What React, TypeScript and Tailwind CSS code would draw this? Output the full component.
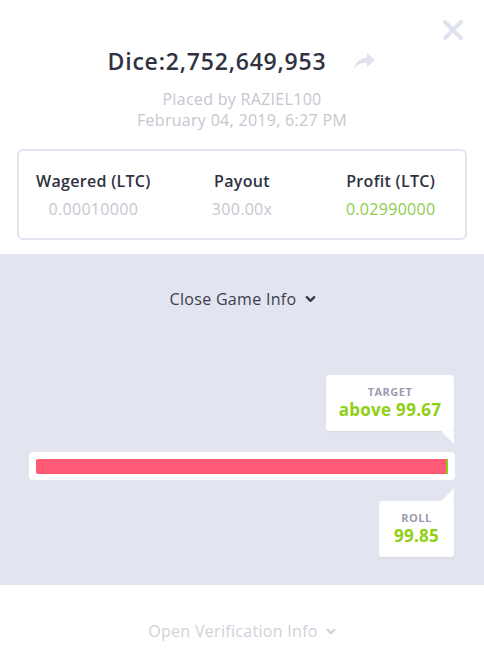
import React from 'react';

const font = { fontFamily: '"Open Sans", Lato, sans-serif' };

const Chevron = ({ className = '' }: { className?: string }) => (
  <svg viewBox="0 0 12 8" className={className} fill="none" stroke="currentColor" strokeWidth="2.6" strokeLinecap="round" strokeLinejoin="round">
    <path d="M2 2l4 4 4-4" />
  </svg>
);

export default function App() {
  return (
    <div className="w-[484px] h-[650px] bg-white flex flex-col text-[#2f3241] tracking-[0.3px]" style={font}>
      {/* header */}
      <div className="relative flex flex-col items-center pt-[46px]">
        <button className="absolute right-[19px] top-[18px] text-[#dfe1ee]">
          <svg viewBox="0 0 24 24" className="w-[24px] h-[24px]" stroke="currentColor" strokeWidth="4" strokeLinecap="round">
            <path d="M4 4l16 16M20 4L4 20" />
          </svg>
        </button>
        <div className="flex items-center">
          <h1 className="text-[23px] font-semibold leading-[30px] tracking-[0.8px]">Dice:2,752,649,953</h1>
          <svg viewBox="0 0 24 20" className="w-[22px] h-[18px] ml-[28px] text-[#dfe1ee]" fill="currentColor">
            <path d="M14 1l9 8-9 8v-5C7 12 3 14 0 19c1-7 5-12 14-13V1z" />
          </svg>
        </div>
        <div className="mt-[13px] text-[16px] leading-[21px] text-[#c6c7d0] text-center">
          <div>Placed by RAZIEL100</div>
          <div>February 04, 2019, 6:27 PM</div>
        </div>
      </div>

      {/* stats card */}
      <div className="mx-[17px] mt-[18px] mb-[14px] h-[91px] border-2 border-[#e3e4ef] rounded-[6px] grid grid-cols-3 items-center py-[18px]">
        {[
          ['Wagered (LTC)', '0.00010000', 'text-[#c6c7d0]'],
          ['Payout', '300.00x', 'text-[#c6c7d0]'],
          ['Profit (LTC)', '0.02990000', 'text-[#8dcb4e]'],
        ].map(([label, value, color]) => (
          <div key={label} className="flex flex-col items-center">
            <div className="text-[16px] font-semibold leading-[20px]">{label}</div>
            <div className={`text-[16px] leading-[20px] mt-[8px] ${color}`}>{value}</div>
          </div>
        ))}
      </div>

      {/* game info */}
      <div className="bg-[#e2e4f0] h-[331px] flex flex-col px-[29px] pt-[35px]">
        <div className="flex items-center justify-center text-[16px] text-[#3b3d4c] leading-[20px] pl-[2px]">
          Close Game Info
          <Chevron className="w-[11px] h-[8px] ml-[9px]" />
        </div>

        <div className="flex flex-col items-end mt-[66px]">
          <div className="relative w-[128px] h-[56px] bg-white rounded-[3px] shadow-[0_1px_2px_rgba(0,0,0,0.06)] flex flex-col items-center justify-center mr-[1px]">
            <div className="text-[11px] font-bold text-[#9a9cae] leading-[14px] tracking-[0.5px]">TARGET</div>
            <div className="text-[17px] font-bold text-[#8fd014] leading-[22px]">above 99.67</div>
            <div className="absolute right-0 top-full w-0 h-0 border-l-[13px] border-l-transparent border-t-[13px] border-t-white" />
          </div>

          <div className="w-full h-[28px] bg-white rounded-[4px] mt-[21px] px-[7px] flex items-center">
            <div className="flex-1 h-[15px] rounded-[2px] bg-[#fe5a75] flex justify-end">
              <div className="w-[2px] h-full bg-[#8fd014]" />
            </div>
          </div>

          <div className="relative w-[75px] h-[56px] bg-white rounded-[3px] shadow-[0_1px_2px_rgba(0,0,0,0.06)] mt-[21px] flex flex-col items-center justify-center mr-[1px]">
            <div className="absolute right-0 bottom-full w-0 h-0 border-l-[13px] border-l-transparent border-b-[13px] border-b-white" />
            <div className="text-[11px] font-bold text-[#9a9cae] leading-[14px] tracking-[0.5px]">ROLL</div>
            <div className="text-[17px] font-bold text-[#8fd014] leading-[22px]">99.85</div>
          </div>
        </div>
      </div>

      {/* verification */}
      <div className="flex items-center justify-center text-[16px] text-[#d0d1da] leading-[20px] mt-[36px]">
        Open Verification Info
        <Chevron className="w-[10px] h-[7px] ml-[8px]" />
      </div>
    </div>
  );
}
